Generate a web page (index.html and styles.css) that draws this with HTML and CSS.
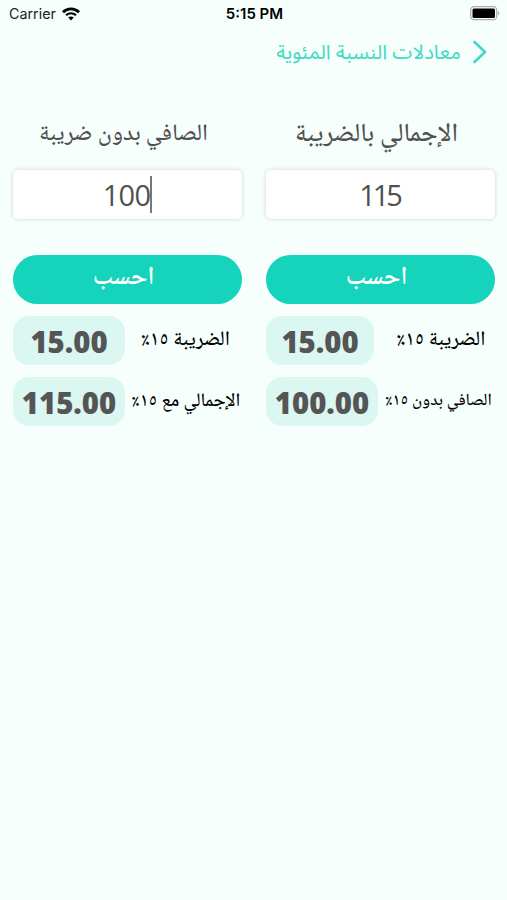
FILE: index.html
```
<!DOCTYPE html>
<html lang="ar">
<head>
  <meta charset="UTF-8">
  <title>معادلات النسبة المئوية</title>
  <link rel="stylesheet" href="styles.css">
</head>
<body>
  <div class="status-bar">
    <div class="carrier">
      <span>Carrier</span>
      <svg class="wifi" viewBox="0 0 18 14" width="18" height="14">
        <path d="M1 5.200C5.500.8 12.500.8 17 5.200" fill="none" stroke="#000" stroke-width="2.900"/>
        <path d="M4 8.300c2.900-2.700 7.100-2.700 10 0" fill="none" stroke="#000" stroke-width="2.200"/>
        <path d="M6.200 10.600c1.600-1.500 4-1.500 5.600 0L9 13.500z" fill="#000"/>
      </svg>
    </div>
    <span class="time">5:15 PM</span>
    <svg class="battery" viewBox="0 0 30 15" width="30" height="15">
      <rect x=".7" y=".7" width="26" height="13" rx="3.500" fill="#fff" stroke="#a9adac" stroke-width="1.300"/>
      <rect x="2.500" y="2.500" width="22.500" height="9.500" rx="1.500" fill="#000"/>
      <path d="M28 5.200c1.800.6 1.800 3.600 0 4.200z" fill="#a9adac"/>
    </svg>
  </div>

  <div class="nav-bar" dir="rtl">
    <svg class="back" viewBox="0 0 14 24" width="14" height="24">
      <path d="M1.500 2l10.500 10L1.500 22" fill="none" stroke="#43d9c3" stroke-width="2.600" stroke-linecap="round" stroke-linejoin="round"/>
    </svg>
    <span class="nav-title">معادلات النسبة المئوية</span>
  </div>

  <div class="columns" dir="rtl">
    <div class="column">
      <h2 class="label label-gross">الإجمالي بالضريبة</h2>
      <div class="field field-gross" dir="ltr">115</div>
      <button class="calc">احسب</button>
      <div class="result">
        <span class="result-name tax tax-gross">الضريبة ١٥٪</span>
        <span class="result-value short">15.00</span>
      </div>
      <div class="result">
        <span class="result-name net">الصافي بدون ١٥٪</span>
        <span class="result-value">100.00</span>
      </div>
    </div>

    <div class="column">
      <h2 class="label label-net">الصافي بدون ضريبة</h2>
      <div class="field" dir="ltr">100<span class="caret"></span></div>
      <button class="calc">احسب</button>
      <div class="result">
        <span class="result-name tax">الضريبة ١٥٪</span>
        <span class="result-value">15.00</span>
      </div>
      <div class="result">
        <span class="result-name total">الإجمالي مع ١٥٪</span>
        <span class="result-value">115.00</span>
      </div>
    </div>
  </div>
</body>
</html>
```
FILE: styles.css
```
* {
  box-sizing: border-box;
}

body {
  margin: 0;
  min-height: 900px;
  background: #f7fffd;
  font-family: 'Noto Naskh Arabic', 'Amiri', 'Liberation Serif', serif;
}

/* status bar */
.status-bar {
  display: grid;
  grid-template-columns: 1fr auto 1fr;
  align-items: center;
  height: 27px;
  padding: 0 7px 0 9px;
  font-family: Inter, sans-serif;
  font-size: 14.3px;
  color: #222;
}

.carrier {
  display: flex;
  align-items: center;
  gap: 6px;
}

.time {
  font-weight: 600;
  font-size: 15px;
  color: #000;
}

.battery {
  justify-self: end;
}

/* navigation */
.nav-bar {
  display: flex;
  align-items: center;
  gap: 12px;
  height: 50px;
  padding-right: 20px;
}

.nav-title {
  font-family: 'Noto Sans Arabic', 'DejaVu Sans', sans-serif;
  font-size: 20.3px;
  color: #43d9c3;
  white-space: nowrap;
}

/* calculators */
.columns {
  display: grid;
  grid-template-columns: 229px 229px;
  gap: 24px;
  padding: 30px 12px 0 13px;
}

.column {
  min-width: 0;
}

.label {
  display: flex;
  align-items: center;
  justify-content: center;
  height: 54px;
  margin: 0 0 9px;
  padding: 2px 8px 0 0;
  font-size: 26px;
  font-weight: 500;
  color: #505050;
  white-space: nowrap;
}

.label-net {
  font-size: 23.5px;
}

.field {
  display: flex;
  align-items: center;
  justify-content: center;
  height: 49px;
  border-radius: 5px;
  background: #fff;
  box-shadow: 0 0 4px rgba(0, 0, 0, 0.18);
  font-family: 'Open Sans', sans-serif;
  font-size: 29px;
  letter-spacing: -0.8px;
  color: #505050;
}

.field-gross {
  padding-right: 2px;
  letter-spacing: -3px;
}

.caret {
  width: 2px;
  height: 37px;
  background: #777;
}

.calc {
  display: block;
  width: 100%;
  height: 49px;
  margin: 36px 0 12px;
  padding: 0 8px 2px 0;
  border: none;
  border-radius: 25px;
  background: #16d3bb;
  color: #fff;
  font-family: inherit;
  font-size: 25.5px;
  font-weight: 600;
  line-height: 1;
}

.result {
  display: flex;
  align-items: center;
  justify-content: space-between;
  height: 49px;
  margin-bottom: 12px;
}

.result-name {
  flex: 1;
  text-align: center;
  color: #000;
  font-weight: 500;
  white-space: nowrap;
}

.tax {
  padding-left: 4px;
  font-size: 20.5px;
}

.tax-gross {
  padding-left: 13px;
}

.net {
  padding-left: 4px;
  font-size: 17px;
}

.total {
  padding-left: 5px;
  font-size: 19px;
}

.result-value {
  flex: none;
  width: 112px;
  height: 49px;
  padding-top: 1px;
  border-radius: 16px;
  background: #dbf7f1;
  color: #555;
  font-family: 'Open Sans', sans-serif;
  font-size: 29.3px;
  font-weight: 800;
  line-height: 50px;
  text-align: center;
}

.result-value.short {
  width: 108px;
}
```
